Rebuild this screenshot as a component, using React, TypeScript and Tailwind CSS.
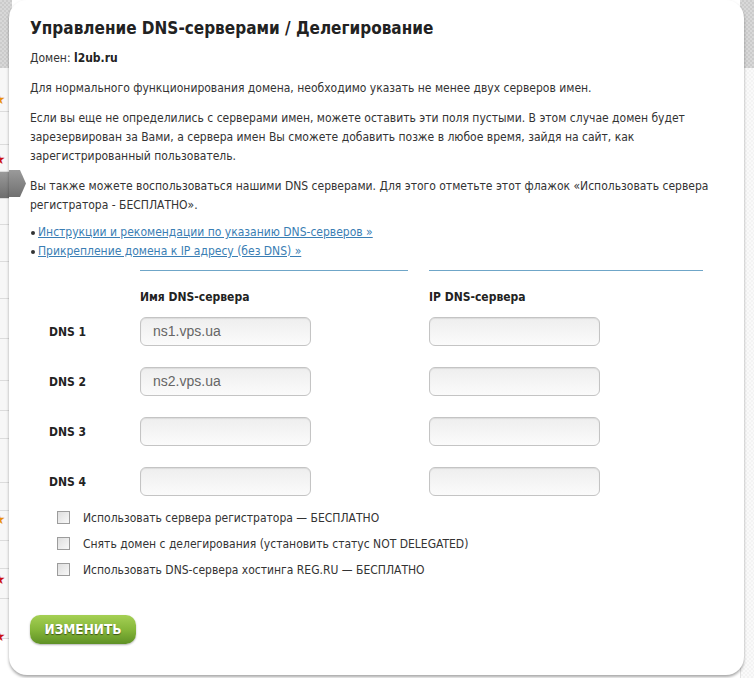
import React from "react";

const body = { fontFamily: '"DejaVu Sans Condensed", "DejaVu Sans", sans-serif' };
const bold = { fontFamily: '"DejaVu Sans Condensed", "DejaVu Sans", Verdana, sans-serif' };

function LeftStrip() {
  const rows: { h: number; dark?: boolean }[] = [
    { h: 68 },
    { h: 44 },
    { h: 33 },
    { h: 27 },
    { h: 27, dark: true },
    { h: 26 },
    { h: 37 },
    { h: 37 },
    { h: 40 },
    { h: 42 },
    { h: 30 },
    { h: 28 },
    { h: 44 },
    { h: 28 },
    { h: 30 },
    { h: 28 },
    { h: 30 },
    { h: 40 },
  ];
  const stars = [
    { y: 100, c: "#e8900c" },
    { y: 160, c: "#cc1111" },
    { y: 520, c: "#e8900c" },
    { y: 580, c: "#cc1111" },
    { y: 637, c: "#cc1111" },
  ];
  return (
    <div className="absolute left-0 top-0 w-[12px] h-full overflow-hidden">
      <div className="flex flex-col h-full">
        {rows.map((r, i) =>
          i === 0 ? (
            <div
              key={i}
              className="shrink-0 bg-[repeating-conic-gradient(#cbcbcb_0_25%,#d8d8d8_0_50%)] bg-[length:4px_4px]"
              style={{ height: r.h }}
            />
          ) : (
            <div
              key={i}
              className={
                "shrink-0 border-b border-[#dcdcdc] " +
                (r.dark ? "bg-gradient-to-b from-[#9a9a9a] to-[#6e6e6e]" : "bg-[#f7f7f7]")
              }
              style={{ height: r.h }}
            />
          )
        )}
      </div>
      {stars.map((s) => (
        <span
          key={s.y}
          className="absolute left-[-7px] text-[14px] leading-none"
          style={{ color: s.c, top: s.y - 8 }}
        >
          ★
        </span>
      ))}
    </div>
  );
}

function RightStrip() {
  return (
    <div className="absolute right-0 top-0 w-[14px] h-full flex flex-col">
      <div className="h-[68px] shrink-0 bg-[repeating-conic-gradient(#cbcbcb_0_25%,#d8d8d8_0_50%)] bg-[length:4px_4px]" />
      <div className="flex-1 bg-[repeating-conic-gradient(#f3f3f3_0_25%,#fafafa_0_50%)] bg-[length:4px_4px] border-l border-[#e2e2e2]" />
    </div>
  );
}

function Input({ value }: { value?: string }) {
  return (
    <div
      className="w-[171px] h-[29px] rounded-[6px] border border-[#c4c4c4] bg-gradient-to-b from-[#eeeeee] to-[#fbfbfb] shadow-[inset_0_1px_1px_rgba(0,0,0,0.08)] flex items-center pl-[12px] text-[14px] text-[#666]"
      style={{ fontFamily: '"Liberation Sans", Arial, sans-serif' }}
    >
      {value}
    </div>
  );
}

function Check({ label }: { label: string }) {
  return (
    <div className="flex items-center h-[19px] mt-[7px] first:mt-0">
      <span className="w-[13px] h-[13px] border border-[#9c9c9c] bg-gradient-to-br from-[#dedede] to-[#f8f8f8] ml-[27px] mr-[13px] shrink-0" />
      <span>{label}</span>
    </div>
  );
}

export default function App() {
  const rows = [
    { label: "DNS 1", name: "ns1.vps.ua" },
    { label: "DNS 2", name: "ns2.vps.ua" },
    { label: "DNS 3", name: "" },
    { label: "DNS 4", name: "" },
  ];
  return (
    <div className="relative w-[754px] h-[678px] bg-white overflow-hidden">
      <LeftStrip />
      <RightStrip />
      {/* arrow tab */}
      <div className="absolute left-[9px] top-[170px] z-20">
        <svg width="18" height="27" viewBox="0 0 18 27">
          <defs>
            <linearGradient id="ag" x1="0" y1="0" x2="0" y2="1">
              <stop offset="0" stopColor="#9a9a9a" />
              <stop offset="1" stopColor="#707070" />
            </linearGradient>
          </defs>
          <path d="M0 0 H11 L17 13.5 L11 27 H0 Z" fill="url(#ag)" />
        </svg>
      </div>
      <div className="absolute left-[9px] top-0 w-[735px] h-[675px] z-10 bg-white rounded-[18px] shadow-[0_2px_3px_rgba(0,0,0,0.35)]" />
      <div
        className="relative z-10 ml-[9px] w-[735px] h-[675px] pl-[21px] pt-[16px] text-[12px] text-[#333]"
        style={body}
      >
        <h1 className="text-[17px] leading-[24px] font-bold text-[#222]" style={bold}>
          Управление DNS-серверами / Делегирование
        </h1>
        <p className="mt-[9px] leading-[19px]">
          Домен: <b className="text-[#222]">l2ub.ru</b>
        </p>
        <p className="mt-[11px] leading-[19px]">
          Для нормального функционирования домена, необходимо указать не менее двух серверов имен.
        </p>
        <p className="mt-[11px] leading-[19px] w-[680px]">
          Если вы еще не определились с серверами имен, можете оставить эти поля пустыми. В этом случае домен будет
          зарезервирован за Вами, а сервера имен Вы сможете добавить позже в любое время, зайдя на сайт, как
          зарегистрированный пользователь.
        </p>
        <p className="mt-[11px] leading-[19px] w-[690px]">
          Вы также можете воспользоваться нашими DNS серверами. Для этого отметьте этот флажок «Использовать сервера
          регистратора - БЕСПЛАТНО».
        </p>
        <ul className="mt-[8px] leading-[19px]">
          <li className="flex items-center">
            <span className="w-[4px] h-[4px] rounded-full bg-[#333] ml-[1px] mr-[3px]" />
            <a className="text-[#3a7eb4] underline">Инструкции и рекомендации по указанию DNS-серверов »</a>
          </li>
          <li className="flex items-center">
            <span className="w-[4px] h-[4px] rounded-full bg-[#333] ml-[1px] mr-[3px]" />
            <a className="text-[#3a7eb4] underline">Прикрепление домена к IP адресу (без DNS) »</a>
          </li>
        </ul>

        <div className="grid grid-cols-[110px_289px_274px] mt-[9px]">
          <div />
          <div className="border-t border-[#6fa6c8] w-[268px]" />
          <div className="border-t border-[#6fa6c8] w-[274px]" />
          <div />
          <div className="mt-[17px] leading-[19px] font-bold text-[#222]" style={bold}>
            Имя DNS-сервера
          </div>
          <div className="mt-[17px] leading-[19px] font-bold text-[#222]" style={bold}>
            IP DNS-сервера
          </div>
          {rows.map((r, i) => (
            <React.Fragment key={r.label}>
              <div
                className={
                  "flex items-center pl-[19px] font-bold text-[#222] h-[29px] " + (i === 0 ? "mt-[10px]" : "mt-[21px]")
                }
                style={bold}
              >
                {r.label}
              </div>
              <div className={i === 0 ? "mt-[10px]" : "mt-[21px]"}>
                <Input value={r.name} />
              </div>
              <div className={i === 0 ? "mt-[10px]" : "mt-[21px]"}>
                <Input />
              </div>
            </React.Fragment>
          ))}
        </div>

        <div className="mt-[12px] flex flex-col">
          <Check label="Использовать сервера регистратора — БЕСПЛАТНО" />
          <Check label="Снять домен с делегирования (установить статус NOT DELEGATED)" />
          <Check label="Использовать DNS-сервера хостинга REG.RU — БЕСПЛАТНО" />
        </div>

        <button
          className="mt-[36px] w-[106px] h-[29px] rounded-[10px] bg-gradient-to-b from-[#a5d054] via-[#86b73a] to-[#5f9125] shadow-[0_1px_2px_rgba(0,0,0,0.3)] text-white font-bold text-[13.5px] flex items-center justify-center [text-shadow:0_1px_1px_rgba(0,0,0,0.5)]"
          style={bold}
        >
          ИЗМЕНИТЬ
        </button>
      </div>
    </div>
  );
}
